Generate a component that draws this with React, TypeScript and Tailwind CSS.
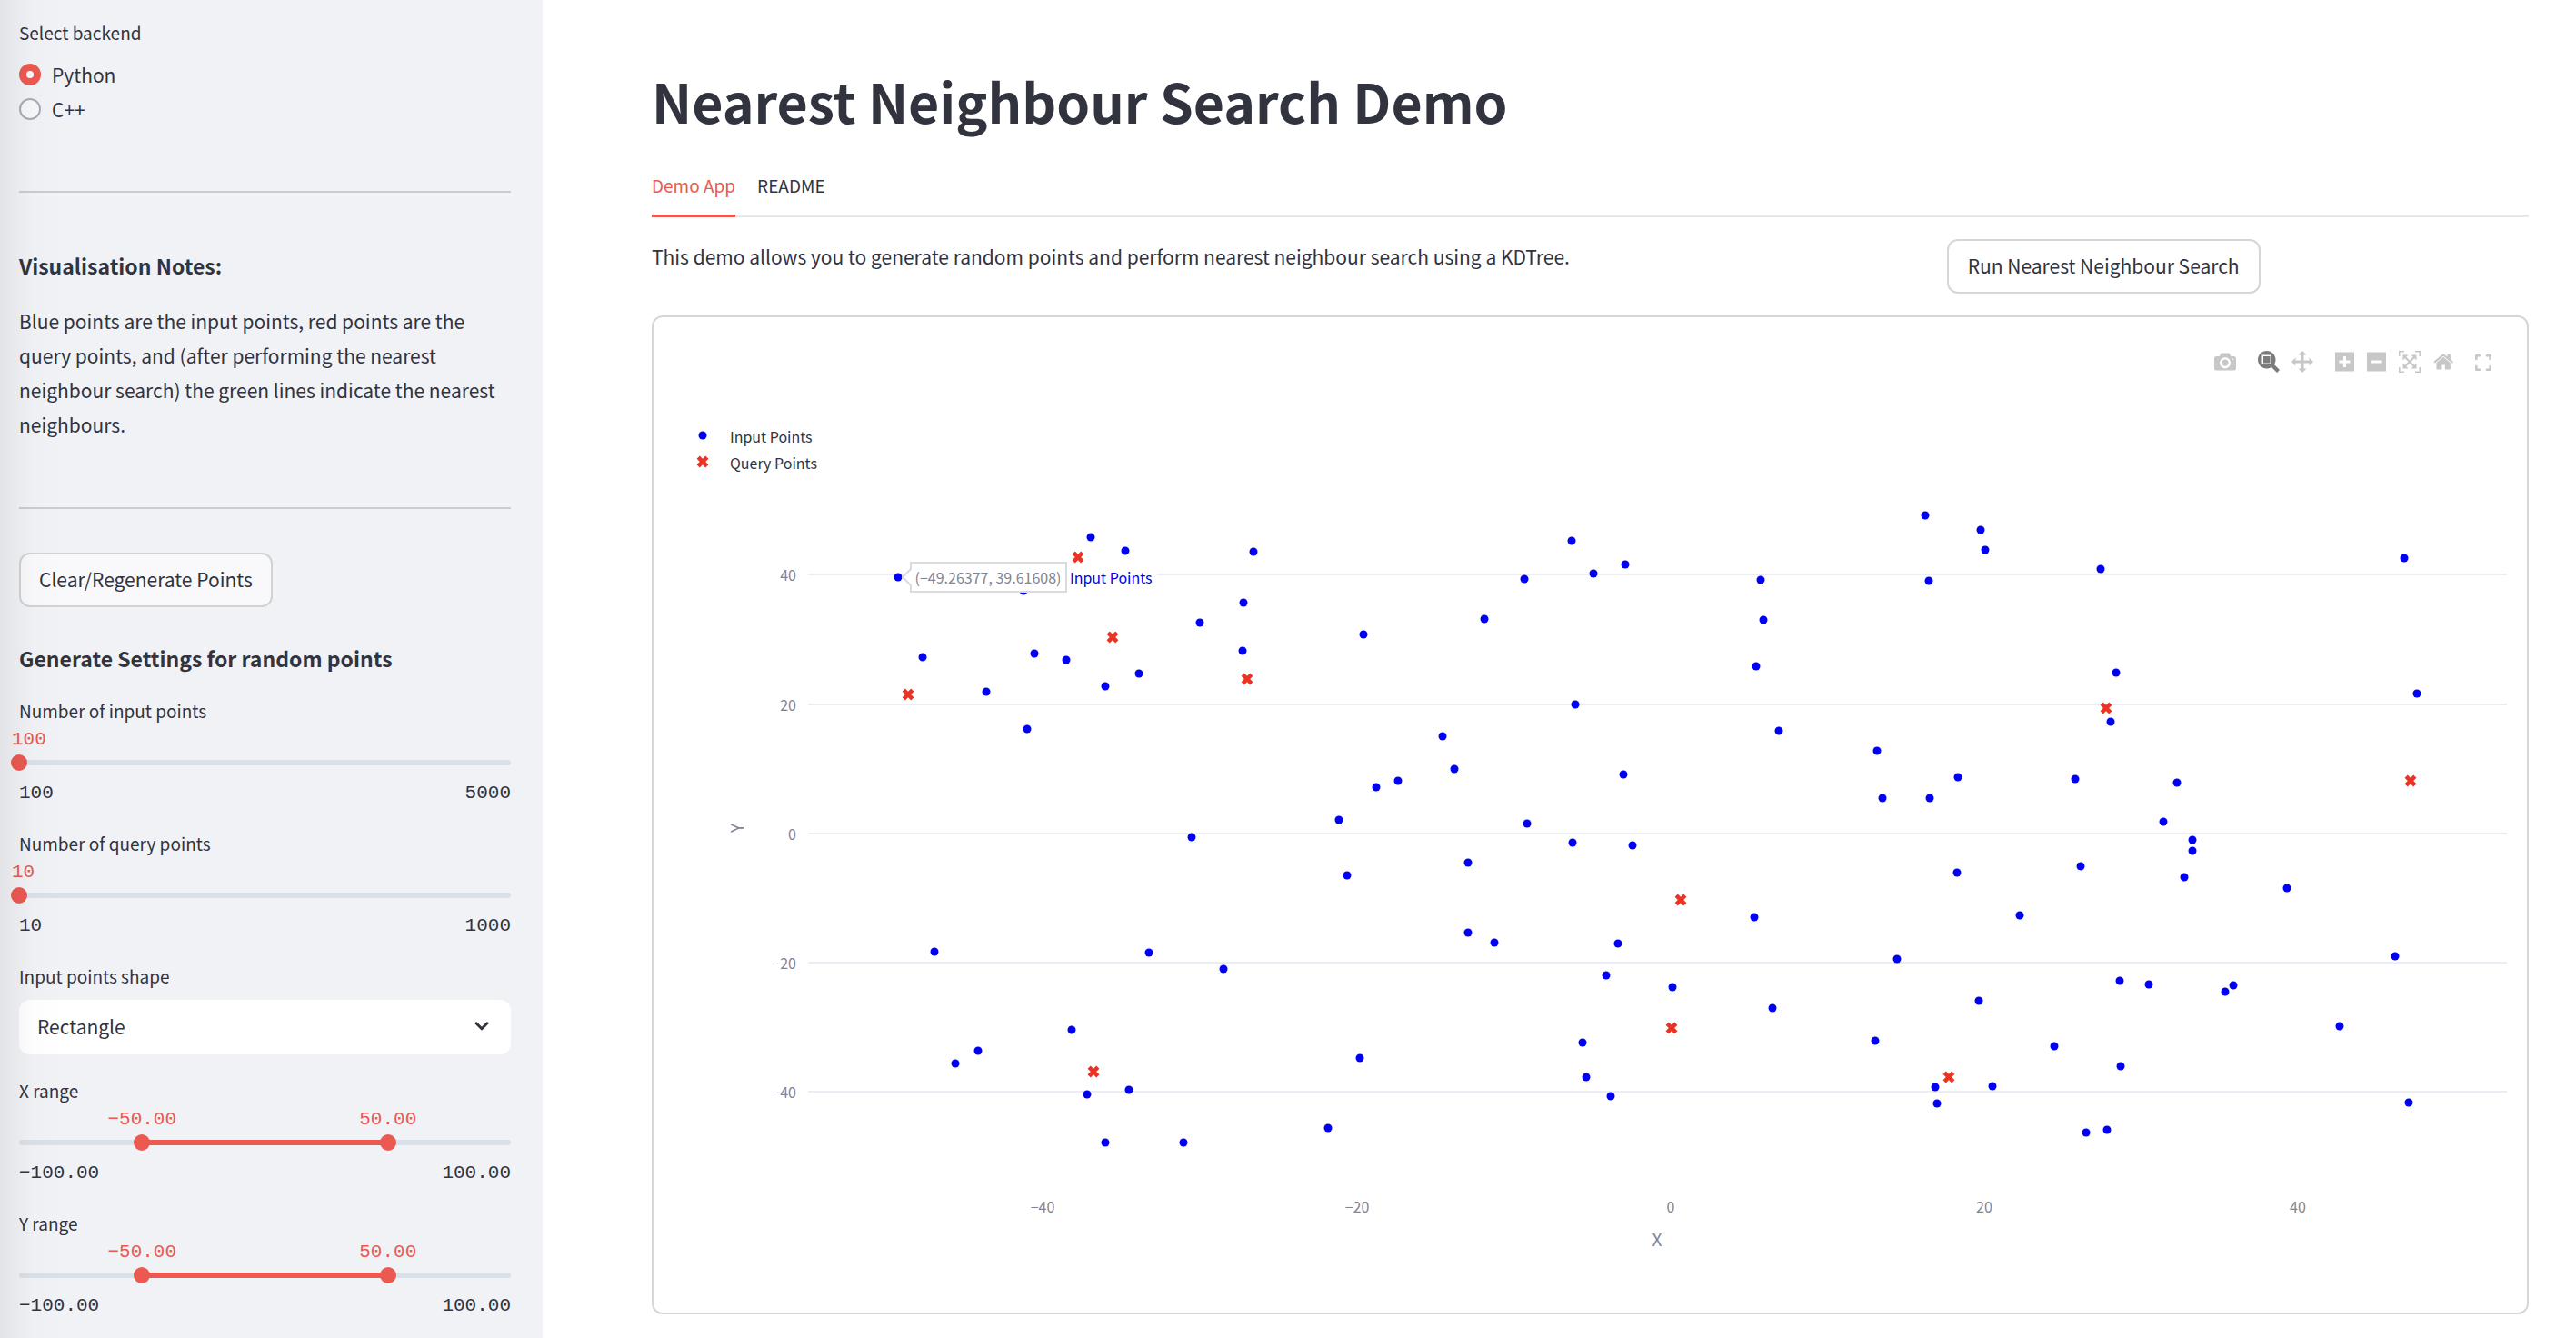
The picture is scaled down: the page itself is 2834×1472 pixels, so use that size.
import { useState } from "react";

type Point = [number, number];

const INPUT_POINTS: Point[] = [
  [1200, 591], [1238, 606], [1379, 607], [988, 635], [1126, 650], [1368, 663], [1320, 685],
  [1367, 716], [1015, 723], [1138, 719], [1173, 726], [1253, 741], [1216, 755], [1085, 761],
  [1130, 802], [1729, 595], [1788, 621], [1753, 631], [1677, 637], [1937, 638], [1633, 681],
  [1940, 682], [1500, 698], [1932, 733], [1733, 775], [1957, 804], [1587, 810], [2065, 826],
  [1600, 846], [1786, 852], [1538, 859], [1514, 866], [2071, 878], [1473, 902], [1680, 906],
  [1730, 927], [1796, 930], [1615, 949], [1482, 963], [1930, 1009], [1615, 1026], [1644, 1037],
  [1780, 1038], [2118, 567], [2179, 583], [2184, 605], [2311, 626], [2122, 639], [2645, 614],
  [2328, 740], [2659, 763], [2322, 794], [2154, 855], [2283, 857], [2395, 861], [2123, 878],
  [2380, 904], [2412, 924], [2412, 936], [2289, 953], [2153, 960], [2403, 965], [2516, 977],
  [2222, 1007], [1311, 921], [1028, 1047], [1264, 1048], [1346, 1066], [1179, 1133],
  [1076, 1156], [1051, 1170], [1196, 1204], [1242, 1199], [1216, 1257], [1302, 1257],
  [2087, 1055], [1767, 1073], [1840, 1086], [1950, 1109], [1741, 1147], [2063, 1145],
  [1496, 1164], [1745, 1185], [1772, 1206], [1461, 1241], [2635, 1052], [2332, 1079],
  [2364, 1083], [2457, 1084], [2448, 1091], [2177, 1101], [2574, 1129], [2260, 1151],
  [2333, 1173], [2129, 1196], [2192, 1195], [2131, 1214], [2295, 1246], [2318, 1243],
  [2650, 1213],
];

const QUERY_POINTS: Point[] = [
  [1186, 613], [1224, 701], [999, 764], [1372, 747], [1849, 990],
  [2317, 779], [2652, 859], [1203, 1179], [1839, 1131], [2144, 1185],
];

const Y_TICKS: [string, number][] = [
  ["40", 632], ["20", 775], ["0", 917], ["−20", 1059], ["−40", 1201],
];

const X_TICKS: [string, number][] = [
  ["−40", 1147], ["−20", 1493], ["0", 1838], ["20", 2183], ["40", 2528],
];

const CROSS = "M0 3.2l3.2 3.2 3.2-3.2-3.2-3.2 3.2-3.2-3.2-3.2-3.2 3.2-3.2-3.2-3.2 3.2 3.2 3.2-3.2 3.2 3.2 3.2z";

const ICONS = {
  camera:
    "m500 450c-83 0-150-67-150-150 0-83 67-150 150-150 83 0 150 67 150 150 0 83-67 150-150 150z m400 150h-120c-16 0-34 13-39 29l-31 93c-6 15-23 28-40 28h-340c-16 0-34-13-39-28l-31-94c-6-15-23-28-40-28h-120c-55 0-100-45-100-100v-450c0-55 45-100 100-100h800c55 0 100 45 100 100v450c0 55-45 100-100 100z m-400-550c-138 0-250 112-250 250 0 138 112 250 250 250 138 0 250-112 250-250 0-138-112-250-250-250z m365 380c-19 0-35 16-35 35 0 19 16 35 35 35 19 0 35-16 35-35 0-19-16-35-35-35z",
  zoom:
    "m1000-25l-250 251c40 63 63 138 63 218 0 224-182 406-407 406-224 0-406-182-406-406s183-406 407-406c80 0 155 22 218 62l250-250 125 125z m-812 250l0 438 437 0 0-438-437 0z m62 375l313 0 0-312-313 0 0 312z",
  pan:
    "m1000 350l-187 188 0-125-250 0 0 250 125 0-188 187-187-187 125 0 0-250-250 0 0 125-188-188 186-187 0 125 252 0 0-250-125 0 187-188 188 188-125 0 0 250 250 0 0-126 187 188z",
  plus:
    "m1 787l0-875 875 0 0 875-875 0z m687-500l-187 0 0-187-125 0 0 187-188 0 0 125 188 0 0 187 125 0 0-187 187 0 0-125z",
  minus: "m0 788l0-876 875 0 0 876-875 0z m688-500l-500 0 0 125 500 0 0-125z",
  autoscale:
    "m250 850l-187 0-63 0 0-62 0-188 63 0 0 188 187 0 0 62z m688 0l-188 0 0-62 188 0 0-188 62 0 0 188 0 62-62 0z m-875-938l0 188-63 0 0-188 0-62 63 0 187 0 0 62-187 0z m875 188l0-188-188 0 0-62 188 0 62 0 0 62 0 188-62 0z m-125 188l-1 0-93-94-156 156 156 156 92-93 2 0 0 250-250 0 0-2 93-92-156-156-156 156 94 92 0 2-250 0 0-250 0 0 93 93 157-156-157-156-93 94 0 0 0-250 250 0 0 0-94 93 156 157 156-157-93-93 0 0 250 0 0 250z",
  home:
    "m786 296v-267q0-15-11-26t-25-10h-214v214h-143v-214h-214q-15 0-25 10t-11 26v267q0 1 0 2t0 2l321 264 321-264q1-1 1-4z m124 39l-34-41q-5-5-12-6h-2q-7 0-12 3l-386 322-386-322q-7-4-13-4-7 2-12 7l-35 41q-4 5-3 12t6 12l401 334q18 15 42 15t43-15l136-114v109q0 8 5 13t13 5h107q8 0 13-5t5-13v-227l122-102q5-5 6-12t-4-13z",
};

function ModeButton({ icon, label, width = 1000, active = false }: { icon: keyof typeof ICONS; label: string; width?: number; active?: boolean }) {
  return (
    <button type="button" aria-label={label} className={active ? "text-[#7b7b7b]" : "text-[#c7c7c7]"}>
      <svg viewBox={`0 0 ${width} 1000`} className="h-6 w-auto" fill="currentColor">
        <path d={ICONS[icon]} transform="matrix(1 0 0 -1 0 850)" />
      </svg>
    </button>
  );
}

function Modebar() {
  return (
    <div className="flex h-6 justify-end gap-6 pr-[39px]">
      <ModeButton icon="camera" label="Download plot as a png" />
      <div className="flex gap-[13px]">
        <ModeButton icon="zoom" label="Zoom" active />
        <ModeButton icon="pan" label="Pan" />
      </div>
      <div className="flex gap-[14px]">
        <ModeButton icon="plus" label="Zoom in" width={875} />
        <ModeButton icon="minus" label="Zoom out" width={875} />
        <ModeButton icon="autoscale" label="Autoscale" />
        <ModeButton icon="home" label="Reset axes" width={929} />
      </div>
      <button type="button" aria-label="Fullscreen" className="pt-px text-[#c7c7c7]">
        <svg viewBox="0 0 18 18" className="h-[18px] w-[18px]" fill="none" stroke="currentColor" strokeWidth="2.6" strokeLinecap="round" strokeLinejoin="round">
          <path d="M1.3 5V1.3H5M13 1.3h3.7V5M16.7 13v3.7H13M5 16.7H1.3V13" />
        </svg>
      </button>
    </div>
  );
}

function Chart() {
  return (
    <svg viewBox="719 410 2061 1034" className="block h-auto w-full" role="img" aria-label="Scatter plot of input points and query points">
      {Y_TICKS.map(([label, y]) => (
        <g key={label}>
          <line x1="889" x2="2758" y1={y} y2={y} stroke={label === "0" ? "#e9edf2" : "#ebedf5"} strokeWidth="2" />
          <text x="876" y={y + 7} textAnchor="end" fontSize="16" fill="#808495">{label}</text>
        </g>
      ))}
      {X_TICKS.map(([label, x]) => (
        <text key={label} x={x} y="1334" textAnchor="middle" fontSize="16" fill="#808495">{label}</text>
      ))}
      <text x="1823" y="1371" textAnchor="middle" fontSize="19" fill="#808495">X</text>
      <text x="818" y="911" textAnchor="middle" fontSize="19" fill="#808495" transform="rotate(-90 818 911)">Y</text>

      {INPUT_POINTS.map(([x, y]) => (
        <circle key={`${x}-${y}`} cx={x} cy={y} r="4.5" fill="#0000f5" />
      ))}
      {QUERY_POINTS.map(([x, y]) => (
        <path key={`${x}-${y}`} d={CROSS} transform={`translate(${x} ${y})`} fill="#ea3323" />
      ))}

      <circle cx="773" cy="479" r="4.5" fill="#0000f5" />
      <text x="803" y="487" fontSize="16" fill="#31333f">Input Points</text>
      <path d={CROSS} transform="translate(773 508)" fill="#ea3323" />
      <text x="803" y="516" fontSize="16" fill="#31333f">Query Points</text>

      <rect x="1173" y="622" width="100" height="26" fill="#ffffff" />
      <path d="M993 635l9-9v-7h171v32h-171v-7z" fill="#ffffff" stroke="#dadbdd" strokeWidth="2" />
      <text x="1087" y="642" textAnchor="middle" fontSize="16" fill="#808495">(−49.26377, 39.61608)</text>
      <text x="1177" y="642" fontSize="16" fill="#0000f5">Input Points</text>
    </svg>
  );
}

const THUMB =
  "pointer-events-none absolute inset-y-0 -left-[9px] m-0 h-[18px] w-[calc(100%+18px)] appearance-none bg-transparent outline-none [&::-webkit-slider-thumb]:pointer-events-auto [&::-webkit-slider-thumb]:h-[18px] [&::-webkit-slider-thumb]:w-[18px] [&::-webkit-slider-thumb]:appearance-none [&::-webkit-slider-thumb]:rounded-full [&::-webkit-slider-thumb]:bg-[#eb5951]";

function Limits({ min, max }: { min: string; max: string }) {
  return (
    <div className="mt-[13px] flex justify-between pb-[3px] font-['Liberation_Mono',monospace] text-[21px] leading-6">
      <span>{min}</span>
      <span>{max}</span>
    </div>
  );
}

function Slider({ id, label, min, max }: { id: string; label: string; min: number; max: number }) {
  const [value, setValue] = useState(min);
  const percent = ((value - min) / (max - min)) * 100;
  return (
    <div>
      <label htmlFor={id} className="block text-[19px] leading-[30px]">{label}</label>
      <output htmlFor={id} className="mt-[5px] -ml-2 block font-['Liberation_Mono',monospace] text-[21px] leading-6 text-[#eb5951]">{value}</output>
      <div className="relative mt-1 flex h-[18px] items-center">
        <div className="h-[6px] w-full overflow-hidden rounded-full bg-[#dadfe8]">
          <div className="h-full bg-[#eb5951]" style={{ width: `${percent}%` }} />
        </div>
        <input id={id} type="range" min={min} max={max} value={value} onChange={(e) => setValue(Number(e.target.value))} className={THUMB} />
      </div>
      <Limits min={String(min)} max={String(max)} />
    </div>
  );
}

const format = (n: number) => n.toFixed(2).replace("-", "−");

function RangeSlider({ label }: { label: string }) {
  const [range, setRange] = useState([-50, 50]);
  const at = (n: number) => `${(n + 100) / 2}%`;
  return (
    <fieldset>
      <legend className="block text-[19px] leading-[30px]">{label}</legend>
      <div className="relative mt-[5px] h-6 font-['Liberation_Mono',monospace] text-[21px] leading-6 text-[#eb5951]">
        {range.map((n) => (
          <output key={n} className="absolute -translate-x-1/2" style={{ left: at(n) }}>{format(n)}</output>
        ))}
      </div>
      <div className="relative mt-1 flex h-[18px] items-center">
        <div className="flex h-[6px] w-full overflow-hidden rounded-full bg-[#dadfe8]">
          <div style={{ width: at(range[0]) }} />
          <div className="bg-[#eb5951]" style={{ width: `${(range[1] - range[0]) / 2}%` }} />
        </div>
        <input aria-label={`${label} minimum`} type="range" min={-100} max={100} value={range[0]} onChange={(e) => setRange([Math.min(Number(e.target.value), range[1] - 1), range[1]])} className={THUMB} />
        <input aria-label={`${label} maximum`} type="range" min={-100} max={100} value={range[1]} onChange={(e) => setRange([range[0], Math.max(Number(e.target.value), range[0] + 1)])} className={THUMB} />
      </div>
      <Limits min="−100.00" max="100.00" />
    </fieldset>
  );
}

function BackendRadio() {
  const [backend, setBackend] = useState("Python");
  return (
    <fieldset>
      <legend className="mb-3 text-[19px] leading-[30px]">Select backend</legend>
      {["Python", "C++"].map((name) => (
        <label key={name} className="flex h-[38px] items-center gap-3 text-[21px] leading-[38px]">
          <input
            type="radio"
            name="backend"
            checked={backend === name}
            onChange={() => setBackend(name)}
            className="m-0 h-6 w-6 appearance-none rounded-full border-2 border-[#a9abb2] bg-[#f6f7f9] checked:border-8 checked:border-[#eb5951] checked:bg-[#f6f7f9]"
          />
          {name}
        </label>
      ))}
    </fieldset>
  );
}

function Sidebar() {
  return (
    <aside className="relative w-[597px] shrink-0 bg-[#f0f2f6] pt-[21px] pr-[35px] pl-[21px]">
      <BackendRadio />
      <hr className="mt-[71px] border-t-2 border-[#cbccd1]" />
      <h3 className="mt-[62px] text-[23px] leading-9 font-semibold">Visualisation Notes:</h3>
      <p className="mt-6 text-[21px] leading-[38px]">
        Blue points are the input points, red points are the query points, and (after performing the nearest neighbour search) the green lines indicate the nearest neighbours.
      </p>
      <hr className="mt-[72px] border-t-2 border-[#cbccd1]" />
      <button type="button" className="mt-12 h-[60px] rounded-xl border-2 border-[#d1d2d6] bg-[#f9f9fb] px-5 text-[21px]">
        Clear/Regenerate Points
      </button>
      <h3 className="mt-[38px] text-[23px] leading-9 font-semibold">Generate Settings for random points</h3>
      <div className="mt-[25px] flex flex-col gap-[25px]">
        <Slider id="input-points" label="Number of input points" min={100} max={5000} />
        <Slider id="query-points" label="Number of query points" min={10} max={1000} />
        <div>
          <label htmlFor="shape" className="block text-[19px] leading-[30px]">Input points shape</label>
          <div className="relative mt-[11px]">
            <select id="shape" className="h-[60px] w-full appearance-none rounded-xl bg-white px-5 text-[21px]">
              <option>Rectangle</option>
            </select>
            <svg viewBox="0 0 16 10" className="pointer-events-none absolute top-6 right-6 h-[10px] w-4" fill="none" stroke="#31333f" strokeWidth="3" strokeLinecap="round" strokeLinejoin="round">
              <path d="M2 1.8l6 6 6-6" />
            </svg>
          </div>
        </div>
        <RangeSlider label="X range" />
        <RangeSlider label="Y range" />
      </div>
      <div className="pointer-events-none absolute inset-y-0 left-0 w-[70px] bg-linear-to-r from-black/6 via-black/1 to-transparent" />
    </aside>
  );
}

export default function App() {
  return (
    <div className="flex min-h-screen bg-white font-['Noto_Sans_CJK_SC',sans-serif] text-[#31333f]">
      <Sidebar />
      <main className="min-w-0 flex-1 pt-[71px] pr-[52px] pb-[26px] pl-[120px]">
        <h1 className="text-[59px] leading-[80px] font-bold">Nearest Neighbour Search Demo</h1>
        <div role="tablist" className="mt-[23px] flex gap-6 border-b-3 border-[#e8e8ea] text-[19px] leading-[30px]">
          <button type="button" role="tab" aria-selected="true" className="-mb-[3px] border-b-3 border-[#eb5951] pt-[15px] pb-[17px] text-[#eb5951]">Demo App</button>
          <button type="button" role="tab" aria-selected="false" className="pt-[15px] pb-[17px]">README</button>
        </div>
        <div className="mt-6 grid grid-cols-[11fr_5fr] items-start gap-4">
          <p className="text-[21px] leading-[38px]">
            This demo allows you to generate random points and perform nearest neighbour search using a KDTree.
          </p>
          <div>
            <button type="button" className="h-[60px] rounded-xl border-2 border-[#d6d6d9] bg-white px-[21px] text-[21px]">
              Run Nearest Neighbour Search
            </button>
          </div>
        </div>
        <div className="mt-6 rounded-xl border-2 border-[#d6d6d9] pt-[37px]">
          <Modebar />
          <Chart />
        </div>
      </main>
    </div>
  );
}
